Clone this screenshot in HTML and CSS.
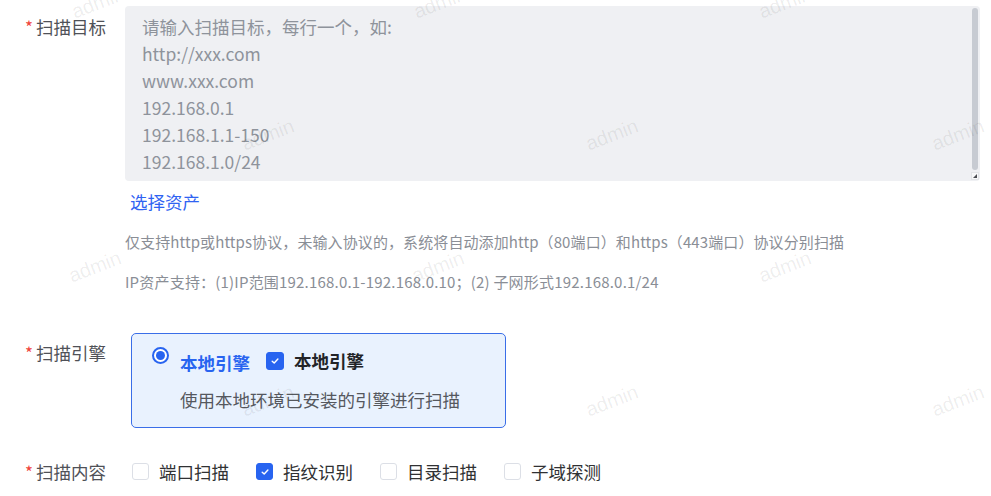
FILE: index.html
```html
<!DOCTYPE html>
<html lang="zh-CN">
<head>
<meta charset="utf-8">
<title>扫描任务</title>
<link rel="stylesheet" href="styles.css">
</head>
<body>
<div class="page">
  <form class="form">
    <div class="item item-target">
      <label class="label"><span class="req">*</span>扫描目标</label>
      <div class="content">
        <div class="textarea-wrap">
          <textarea class="textarea" placeholder="请输入扫描目标，每行一个，如:&#10;http://xxx.com&#10;www.xxx.com&#10;192.168.0.1&#10;192.168.1.1-150&#10;192.168.1.0/24"></textarea>
          <span class="resizer"></span>
        </div>
        <a class="link">选择资产</a>
        <p class="hint hint-1">仅支持http或https协议，未输入协议的，系统将自动添加http（80端口）和https（443端口）协议分别扫描</p>
        <p class="hint hint-2">IP资产支持：(1)IP范围192.168.0.1-192.168.0.10；(2) 子网形式192.168.0.1/24</p>
      </div>
    </div>

    <div class="item item-engine">
      <label class="label"><span class="req">*</span>扫描引擎</label>
      <div class="content">
        <div class="engine-card">
          <div class="engine-head">
            <span class="radio"><span class="radio-dot"></span></span>
            <span class="engine-name">本地引擎</span>
            <span class="check check-on"><svg viewBox="0 0 10 10" width="10" height="10"><path d="M2.2 5.2 L4.2 7.1 L7.9 3.1" fill="none" stroke="#fff" stroke-width="1.4" stroke-linecap="round" stroke-linejoin="round"/></svg></span>
            <span class="engine-tag">本地引擎</span>
          </div>
          <div class="engine-desc">使用本地环境已安装的引擎进行扫描</div>
        </div>
      </div>
    </div>

    <div class="item item-scope">
      <label class="label"><span class="req">*</span>扫描内容</label>
      <div class="content checks">
        <span class="opt"><span class="check"></span><span class="opt-text">端口扫描</span></span>
        <span class="opt"><span class="check check-on"><svg viewBox="0 0 10 10" width="10" height="10"><path d="M2.2 5.2 L4.2 7.1 L7.9 3.1" fill="none" stroke="#fff" stroke-width="1.4" stroke-linecap="round" stroke-linejoin="round"/></svg></span><span class="opt-text">指纹识别</span></span>
        <span class="opt"><span class="check"></span><span class="opt-text">目录扫描</span></span>
        <span class="opt"><span class="check"></span><span class="opt-text">子域探测</span></span>
      </div>
    </div>
  </form>

  <div class="watermarks" aria-hidden="true">
    <span class="wm" style="left:98px;top:3px">admin</span>
    <span class="wm" style="left:440px;top:3px">admin</span>
    <span class="wm" style="left:785px;top:3px">admin</span>
    <span class="wm" style="left:268px;top:135px">admin</span>
    <span class="wm" style="left:612px;top:135px">admin</span>
    <span class="wm" style="left:958px;top:135px">admin</span>
    <span class="wm" style="left:95px;top:267px">admin</span>
    <span class="wm" style="left:438px;top:267px">admin</span>
    <span class="wm" style="left:785px;top:267px">admin</span>
    <span class="wm" style="left:268px;top:401px">admin</span>
    <span class="wm" style="left:612px;top:401px">admin</span>
    <span class="wm" style="left:958px;top:401px">admin</span>
  </div>
</div>
</body>
</html>
```

FILE: styles.css
```css
* { box-sizing: border-box; }

html, body {
  margin: 0;
  padding: 0;
  background: #fff;
}

body {
  font-family: "Noto Sans CJK SC", "Noto Sans", sans-serif;
  font-size: 17.5px;
  color: #303133;
  overflow: hidden;
}

.page {
  position: relative;
  width: 991px;
  height: 496px;
  overflow: hidden;
}

.form {
  padding-top: 6px;
  padding-right: 11px;
}

.item {
  display: grid;
  grid-template-columns: 106px 1fr;
  column-gap: 19px;
}

.label {
  text-align: right;
  line-height: 27px;
  color: #4f5157;
  font-size: 17.5px;
  white-space: nowrap;
}

.req {
  color: #f0443c;
  margin-right: 3px;
  font-size: 17px;
}

.item-target .label { padding-top: 7px; }

.content { min-width: 0; }

.textarea-wrap {
  position: relative;
}

/* scrollbar thumb of the target box */
.textarea-wrap::after {
  content: "";
  position: absolute;
  right: 2px;
  top: 2px;
  width: 6px;
  height: 162px;
  border-radius: 3px;
  background: #c7cbd2;
  pointer-events: none;
}

.resizer {
  position: absolute;
  right: 1px;
  bottom: 1px;
  width: 8px;
  height: 8px;
  background: #f7f8f9;
  border: 1px solid #e3e5e8;
  pointer-events: none;
}

.resizer::after {
  content: "";
  position: absolute;
  left: 1px;
  top: 1px;
  width: 0;
  height: 0;
  border-left: 4px solid transparent;
  border-bottom: 4px solid #4a4d52;
}

.textarea {
  display: block;
  width: 100%;
  height: 175px;
  margin: 0;
  padding: 7px 20px 6px 17px;
  border: none;
  border-radius: 4px;
  background: #eff0f3;
  font-family: inherit;
  font-size: 17.5px;
  line-height: 27px;
  color: #606266;
  overflow: hidden;
  resize: none;
  outline: none;
}

.textarea::placeholder {
  color: #8e939b;
  opacity: 1;
}

.link {
  display: inline-block;
  margin-top: 7px;
  margin-left: 5px;
  line-height: 27px;
  color: #2f63f2;
  cursor: pointer;
}

.hint {
  margin: 0;
  font-size: 15px;
  line-height: 20px;
  color: #8a8e96;
  white-space: nowrap;
}

.hint-1 { margin-top: 17px; letter-spacing: 0.1px; }
.hint-2 { margin-top: 20px; letter-spacing: 0.2px; }

.item-engine { margin-top: 41px; }
.item-engine .label { padding-top: 6px; }

.engine-card {
  width: 375px;
  margin-left: 6px;
  padding: 13px 20px 15px 20px;
  border: 1px solid #3a6ee8;
  border-radius: 5px;
  background: #e9f2fe;
}

.engine-head {
  display: flex;
  align-items: flex-start;
}

.radio {
  width: 17px;
  height: 17px;
  border: 2px solid #2864f0;
  border-radius: 50%;
  background: #fff;
  display: flex;
  align-items: center;
  justify-content: center;
  flex: none;
}

.radio-dot {
  width: 9px;
  height: 9px;
  border-radius: 50%;
  background: #2864f0;
}

.engine-name {
  margin-left: 11px;
  margin-top: 4px;
  line-height: 24px;
  font-weight: 700;
  color: #2864f0;
}

.engine-head .check {
  width: 18px;
  height: 18px;
  margin-left: 16px;
  margin-top: 5px;
}

.engine-tag {
  margin-left: 10px;
  margin-top: 2px;
  line-height: 24px;
  font-weight: 700;
  color: #222428;
}

.engine-desc {
  margin-top: 13px;
  margin-left: 28px;
  line-height: 24px;
  color: #55585e;
}

.check {
  width: 17px;
  height: 17px;
  border: 1px solid #dcdfe6;
  border-radius: 3px;
  background: #fff;
  display: inline-flex;
  align-items: center;
  justify-content: center;
  flex: none;
}

.check-on {
  background: #2864f0;
  border-color: #2864f0;
}

.item-scope { margin-top: 30px; }

.checks {
  display: flex;
  align-items: center;
  height: 27px;
  padding-left: 7px;
}

.opt {
  display: inline-flex;
  align-items: center;
  margin-right: 27px;
}

.opt-text {
  margin-left: 10px;
  line-height: 27px;
  color: #303133;
}

.watermarks {
  position: absolute;
  inset: 0;
  pointer-events: none;
}

.wm {
  position: absolute;
  transform: translate(-50%, -50%) rotate(-21deg);
  font-family: "Liberation Sans", sans-serif;
  font-size: 20px;
  color: rgba(0, 0, 0, 0.075);
  white-space: nowrap;
}
```
